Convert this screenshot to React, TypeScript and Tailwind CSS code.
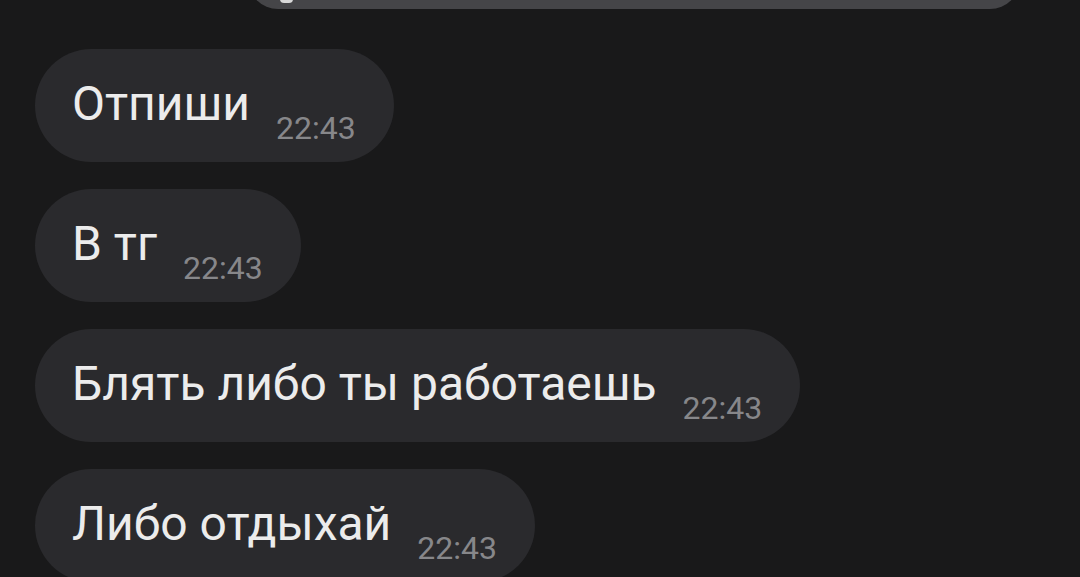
import React from 'react';

const messages = [
    { text: 'Отпиши', time: '22:43' },
    { text: 'В тг', time: '22:43' },
    { text: 'Блять либо ты работаешь', time: '22:43' },
    { text: 'Либо отдыхай', time: '22:43' },
];

function Bubble({ text, time }: { text: string; time: string }) {
    return (
        <div className="flex items-start h-[113px] shrink-0 w-fit rounded-full bg-[#2a2a2d] pl-[37px] pr-[38px] pt-[31px]">
            <span className="text-[48px] leading-[48px] text-[#ececec] whitespace-nowrap">{text}</span>
            <span className="ml-[26px] mt-[32px] text-[32px] leading-[32px] text-[#87878a] whitespace-nowrap">{time}</span>
        </div>
    );
}

export default function App() {
    return (
        <div
            className="w-[1080px] h-[577px] overflow-hidden bg-[#19191a] flex flex-col"
            style={{ fontFamily: 'Roboto, "Noto Sans", sans-serif' }}
        >
            {/* previous message, cut off at the top */}
            <div className="ml-[248px] w-[772px] h-[60px] -mt-[51px] shrink-0 rounded-[30px] bg-[#454548] flex items-end pl-[32px] pb-[6px]">
                <span className="w-[13px] h-[4px] rounded-b-full bg-[#d8d8d8]" />
            </div>

            {/* Messages */}
            <div className="flex flex-col gap-[27px] pl-[35px] pt-[40px]">
                {messages.map((m, i) => (
                    <Bubble key={i} text={m.text} time={m.time} />
                ))}
            </div>
        </div>
    );
}
